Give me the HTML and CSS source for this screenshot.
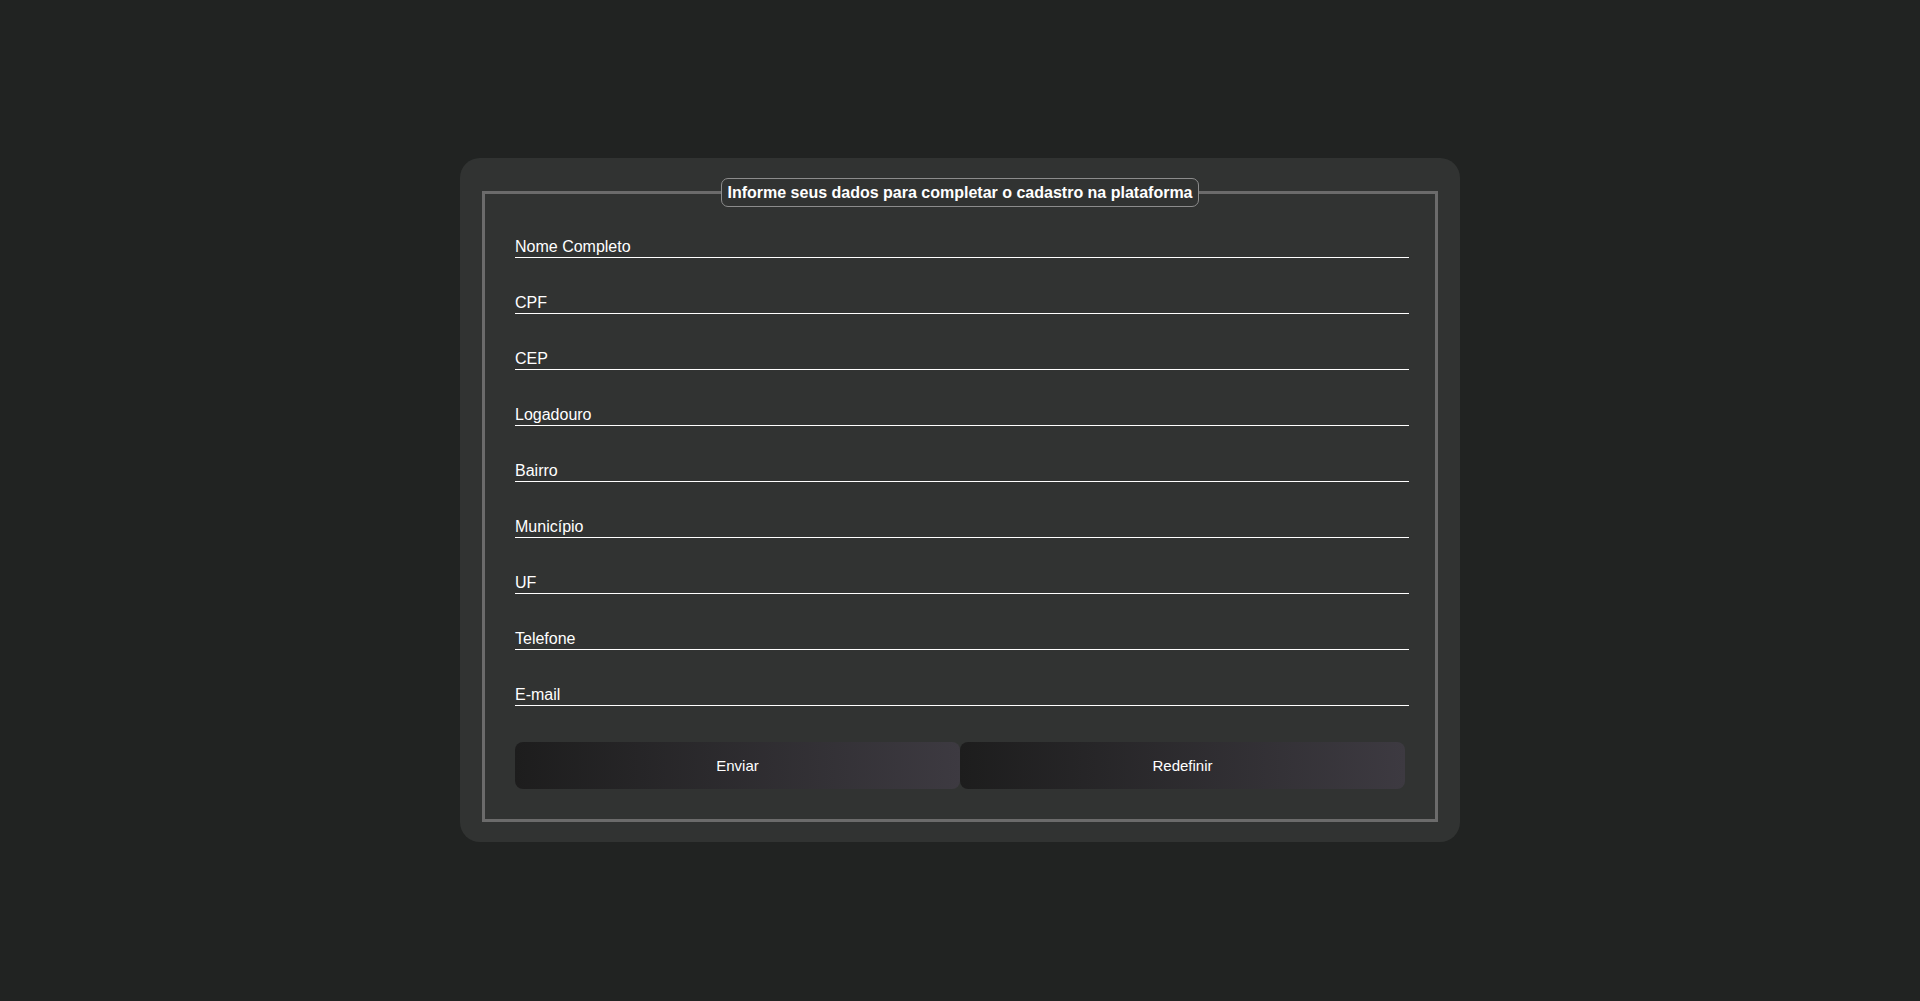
FILE: index.html
```html
<!DOCTYPE html>
<html lang="pt-BR">
<head>
<meta charset="utf-8">
<title>Cadastro</title>
<link rel="stylesheet" href="styles.css">
</head>
<body>
<main class="card">
  <form class="form">
    <fieldset class="box">
      <legend class="title">Informe seus dados para completar o cadastro na plataforma</legend>
      <div class="fields">
        <div class="field"><input id="nome" type="text"><label for="nome">Nome Completo</label></div>
        <div class="field"><input id="cpf" type="text"><label for="cpf">CPF</label></div>
        <div class="field"><input id="cep" type="text"><label for="cep">CEP</label></div>
        <div class="field"><input id="logradouro" type="text"><label for="logradouro">Logadouro</label></div>
        <div class="field"><input id="bairro" type="text"><label for="bairro">Bairro</label></div>
        <div class="field"><input id="municipio" type="text"><label for="municipio">Município</label></div>
        <div class="field"><input id="uf" type="text"><label for="uf">UF</label></div>
        <div class="field"><input id="telefone" type="text"><label for="telefone">Telefone</label></div>
        <div class="field"><input id="email" type="email"><label for="email">E-mail</label></div>
      </div>
      <div class="actions">
        <button type="submit" class="btn">Enviar</button>
        <button type="reset" class="btn">Redefinir</button>
      </div>
    </fieldset>
  </form>
</main>
</body>
</html>
```
FILE: styles.css
```css
* { box-sizing: border-box; }
html, body { height: 100%; }
body {
  margin: 0;
  background: #212322;
  font-family: "Liberation Sans", Arial, sans-serif;
  color: #fff;
  display: flex;
  align-items: center;
  justify-content: center;
  min-height: 100vh;
}
.card {
  width: 1000px;
  background: #313332;
  border-radius: 20px;
  padding: 20px;
  margin-bottom: 2px;
}
.form { margin: 0; }
.box {
  margin: 0 2px;
  border: 3px solid #6b6b6b;
  padding: 15px 30px 30px 30px;
  min-width: 0;
}
.title {
  margin: 0 auto;
  padding: 4px 5px;
  border: 1px solid #8c8c8c;
  border-radius: 7px;
  font-size: 16px;
  font-weight: bold;
  line-height: 19px;
  color: #fff;
}
.fields {
  display: flex;
  flex-direction: column;
  gap: 20px;
  width: calc(100% + 4px);
}
.field {
  position: relative;
  height: 36px;
}
.field input {
  display: block;
  width: 100%;
  height: 36px;
  margin: 0;
  padding: 0 0 2px 0;
  background: transparent;
  border: none;
  border-bottom: 1px solid #fff;
  color: #fff;
  font-family: inherit;
  font-size: 16px;
  outline: none;
}
.field label {
  position: absolute;
  left: 0;
  bottom: 2px;
  font-size: 16px;
  line-height: 18px;
  color: #fff;
  pointer-events: none;
}
.actions {
  display: flex;
  width: 890px;
  margin-top: 36px;
}
.btn {
  flex: 1 1 0;
  height: 47px;
  border: none;
  border-radius: 8px;
  background: linear-gradient(90deg, #1d1d1d, #3d3a41);
  color: #fff;
  font-family: inherit;
  font-size: 15px;
  cursor: pointer;
}
```
